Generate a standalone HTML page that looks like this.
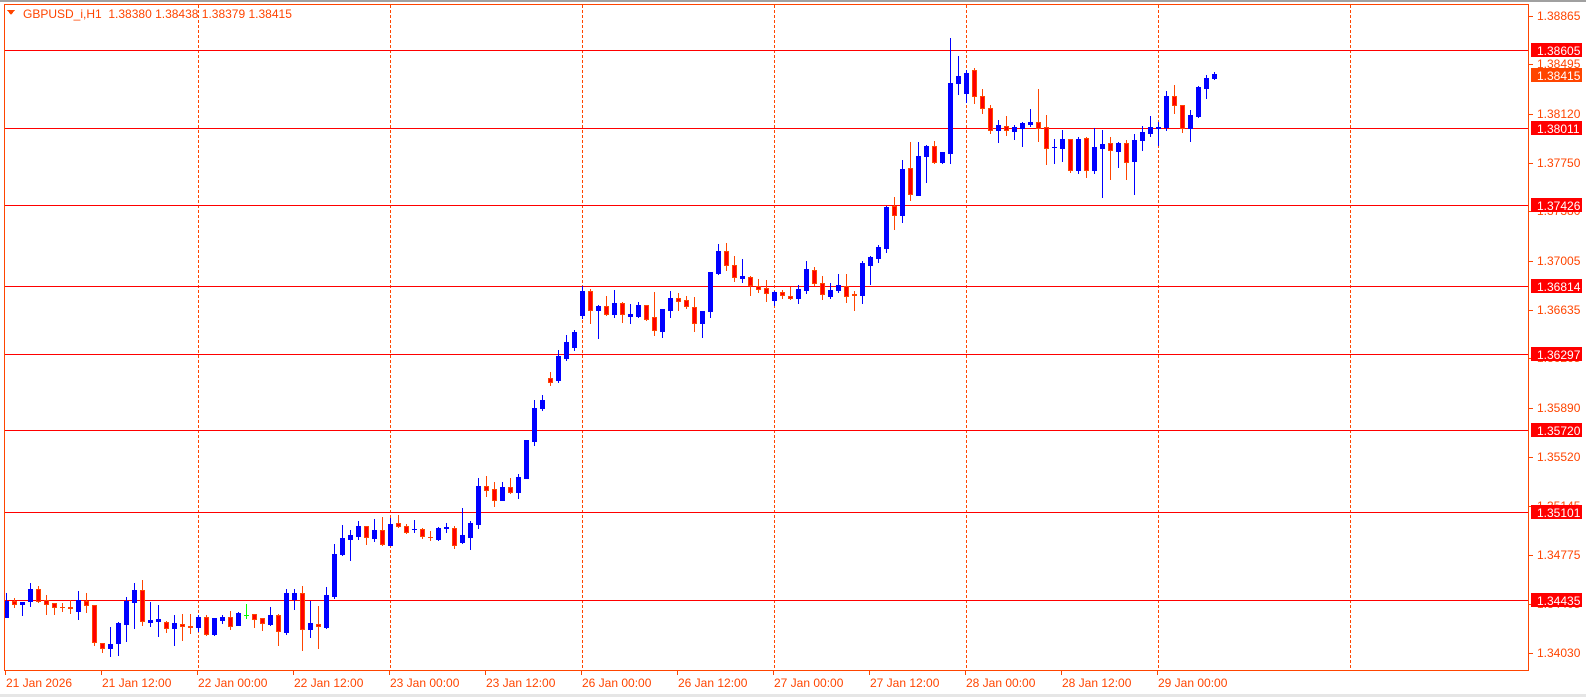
<!DOCTYPE html>
<html><head><meta charset="utf-8"><style>
html,body{margin:0;padding:0;background:#fff;width:1586px;height:697px;overflow:hidden}
svg{display:block}
text{font-family:"Liberation Sans",sans-serif;font-size:12px}
</style></head><body>
<svg id="s" width="1586" height="697" xmlns="http://www.w3.org/2000/svg" shape-rendering="crispEdges">
<rect x="0" y="0" width="1586" height="697" fill="#fff"/>
<rect x="0" y="0" width="1586" height="2" fill="#a0a0a0"/>
<rect x="0" y="694" width="1586" height="3" fill="#e6e6e6"/>
<g id="grid"></g>
<g id="hl"></g>
<g id="c"></g>
<rect x="4.5" y="4.5" width="1524" height="666" fill="none" stroke="#ff4500"/>
<g id="ax"></g>
<polygon points="7,10 15,10 11,15" fill="#ff4500"/>
<text x="23" y="18" fill="#ff4500" xml:space="preserve">GBPUSD_i,H1  1.38380 1.38438 1.38379 1.38415</text>
</svg>
<script>
var NS="http://www.w3.org/2000/svg";
function el(p,t,a,txt){var e=document.createElementNS(NS,t);for(var k in a)e.setAttribute(k,a[k]);if(txt!=null)e.textContent=txt;document.getElementById(p).appendChild(e);return e;}
for(var x=198;x<1529;x+=192){el('grid','line',{x1:x+.5,y1:5,x2:x+.5,y2:670,stroke:'#ff4500','stroke-dasharray':'3,2'});}
var Y=function(p){return 50+(1.38605-p)*13180;};
var hl=[1.38605,1.38011,1.37426,1.36814,1.36297,1.35720,1.35101,1.34435];
hl.forEach(function(p){var y=Math.round(Y(p))+.5;el('hl','line',{x1:5,y1:y,x2:1529,y2:y,stroke:'#ff0000'});});
var al=[1.38865,1.38495,1.38120,1.37750,1.37380,1.37005,1.36635,1.36265,1.35890,1.35520,1.35145,1.34775,1.34405,1.34030];
al.forEach(function(p){var y=Math.round(Y(p));el('ax','line',{x1:1529,y1:y+.5,x2:1533,y2:y+.5,stroke:'#ff4500'});el('ax','text',{x:1537,y:y+4,fill:'#ff4500'},p.toFixed(5));});
hl.forEach(function(p){var y=Math.round(Y(p));el('ax','rect',{x:1531,y:y-7,width:51,height:14,fill:'#ff0000'});el('ax','text',{x:1537,y:y+5,fill:'#fff'},p.toFixed(5));});
(function(){var y=75;el('ax','rect',{x:1531,y:y-7,width:51,height:14,fill:'#ff4500'});el('ax','text',{x:1537,y:y+5,fill:'#fff'},'1.38415');})();
var tl=["21 Jan 2026","21 Jan 12:00","22 Jan 00:00","22 Jan 12:00","23 Jan 00:00","23 Jan 12:00","26 Jan 00:00","26 Jan 12:00","27 Jan 00:00","27 Jan 12:00","28 Jan 00:00","28 Jan 12:00","29 Jan 00:00"];
tl.forEach(function(t,i){var x=5+96*i;el('ax','line',{x1:x+.5,y1:671,x2:x+.5,y2:675,stroke:'#ff4500'});el('ax','text',{x:x+1,y:687,fill:'#ff4500'},t);});
var D="b 601 617 593 617|r 601 604 598 607|b 602 604 602 615|b 589 601 583 606|r 589 601 586 602|r 600 604 595 614|r 603 607 603 614|r 607 607 603 611|r 607 608 600 613|b 600 611 591 619|r 601 605 593 612|r 605 642 605 645|r 643 648 643 652|b 644 648 627 656|b 623 643 622 655|b 601 624 597 641|b 590 602 583 628|r 590 621 580 625|b 620 622 602 626|b 619 621 605 636|r 622 628 621 632|b 623 628 615 645|r 624 626 614 640|r 626 627 614 633|b 617 627 615 631|r 617 634 615 635|b 618 634 618 635|b 617 620 615 623|r 617 626 611 629|b 613 625 612 625|g 615 615 604 618|r 614 619 614 627|r 618 623 618 630|b 615 624 607 625|r 615 631 614 645|b 593 632 589 634|b 593 599 589 609|r 593 629 586 650|b 623 629 601 637|r 624 626 606 648|b 595 627 587 628|b 554 596 544 598|b 538 554 525 555|b 535 539 530 560|b 526 536 521 539|r 526 537 526 544|b 530 538 519 541|r 530 544 517 545|b 524 545 518 545|r 523 526 515 527|r 526 532 524 533|b 529 529 520 532|r 529 536 528 538|r 537 537 531 540|b 528 539 527 540|b 527 528 523 532|r 528 545 526 548|b 535 542 508 543|b 523 537 521 549|b 486 524 478 528|r 486 490 476 496|r 489 500 482 506|b 487 500 482 500|r 487 492 478 493|b 477 492 474 498|b 440 478 440 478|b 408 441 400 445|b 400 408 395 410|r 378 382 372 385|b 356 380 350 382|b 342 358 335 360|b 332 347 330 350|b 291 315 286 318|r 291 310 289 323|b 306 310 305 338|r 306 314 296 315|b 303 314 290 317|r 303 314 302 322|b 314 316 304 323|b 305 316 302 317|r 305 319 305 320|r 317 330 292 335|b 309 331 309 337|b 298 310 291 317|r 298 301 293 310|r 300 306 296 308|r 307 323 297 331|b 311 323 311 337|b 272 311 272 317|b 251 273 244 274|r 251 265 243 270|r 265 277 256 281|b 276 278 259 282|r 277 285 276 295|r 286 289 279 292|r 288 293 280 301|b 292 300 291 305|r 292 295 290 298|r 296 298 287 299|b 289 298 285 303|b 269 290 261 293|r 270 283 267 285|r 283 294 276 299|b 290 296 283 298|b 285 290 274 292|r 286 296 274 302|r 294 295 291 310|b 263 295 261 303|b 257 265 256 284|b 247 258 245 262|b 207 248 206 252|r 206 215 197 229|b 169 215 160 222|r 168 194 142 200|b 156 195 142 195|b 146 156 145 182|r 146 162 141 163|b 152 162 152 163|b 83 153 38 163|b 76 83 56 94|b 73 93 70 102|r 70 96 68 103|r 96 108 89 113|r 108 130 105 133|b 125 130 120 142|r 126 130 116 135|b 127 131 125 139|b 123 128 122 146|b 122 124 109 126|r 122 128 89 141|r 127 148 115 164|b 147 147 139 163|b 139 148 130 161|r 139 170 139 172|b 139 170 137 173|r 138 170 137 177|b 147 170 128 173|b 144 148 130 197|r 143 150 137 179|b 143 151 142 167|r 143 162 140 179|b 140 161 134 194|b 132 140 126 150|b 127 133 116 136|b 127 128 122 145|b 96 127 91 130|r 96 105 85 113|r 105 128 105 132|b 115 128 110 141|b 87 116 86 117|b 78 88 75 98|b 74 78 72 79";
D.split("|").forEach(function(s,k){var a=s.split(" "),t=a[0],o=+a[1],c=+a[2],h=+a[3],l=+a[4];var x=6+8*k;
var wc=t=='b'?'#0000ff':(t=='g'?'#00ff00':'#ff4500');
el('c','rect',{x:x,y:Math.min(h,o),width:1,height:Math.max(1,l-Math.min(h,o)+1),fill:wc});
if(c-o<1){el('c','rect',{x:x-2,y:o,width:5,height:1,fill:wc});}
else if(t=='b'){el('c','rect',{x:x-2,y:o,width:5,height:c-o+1,fill:'#0000ff'});}
else{el('c','rect',{x:x-2,y:o,width:5,height:c-o+1,fill:'#ff4500'});if(c-o>1)el('c','rect',{x:x-1,y:o+1,width:3,height:c-o-1,fill:'#ff0000'});}
});
</script>
</body></html>
